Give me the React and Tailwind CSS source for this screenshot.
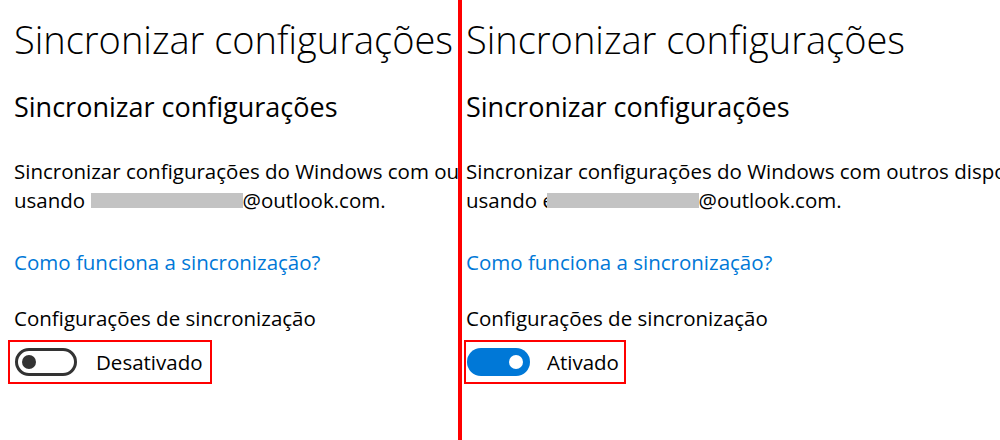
import React from 'react';

const Toggle = ({ on }) =>
  on ? (
    <div className="flex items-center justify-end w-[63px] h-[28px] rounded-full bg-[#0078d7] pr-[7px] shrink-0">
      <div className="w-[14px] h-[14px] rounded-full bg-white" />
    </div>
  ) : (
    <div className="flex items-center w-[62px] h-[28px] rounded-full border-[3px] border-[#333] pl-[4px] shrink-0">
      <div className="w-[14px] h-[14px] rounded-full bg-[#333]" />
    </div>
  );

const Panel = ({ on, pad, box, gap, partial }) => (
  <div className={`flex-1 overflow-hidden whitespace-nowrap text-black ${pad}`}>
    <div className="pt-[20px] h-[57px] text-[38px] leading-[38px] font-light">Sincronizar configurações</div>
    <div className="pt-[36px] text-[27px] leading-[27px]">Sincronizar configurações</div>
    <div className="pt-[37px] text-[20.5px] leading-[29px]">
      <div>Sincronizar configurações do Windows com outros dispositivos</div>
      <div>
        usando&nbsp;
        {partial && <span className="inline-block w-[4px] overflow-hidden align-top">e</span>}
        <span className="inline-block w-[152px] h-[15px] bg-[#c3c3c3] align-baseline" />
        @outlook.com.
      </div>
    </div>
    <div className="pt-[33px] text-[20.5px] leading-[29px] text-[#0078d7]">Como funciona a sincronização?</div>
    <div className="pt-[27px] text-[20.5px] leading-[29px]">Configurações de sincronização</div>
    <div className={`mt-[7px] flex items-center w-fit h-[44px] border-2 border-[#f00] ${box}`}>
      <Toggle on={on} />
      <span className={`text-[20.5px] leading-[29px] ${gap}`}>{on ? 'Ativado' : 'Desativado'}</span>
    </div>
  </div>
);

export default function App() {
  return (
    <div className="flex w-[1000px] h-[440px] bg-white font-['Open_Sans',sans-serif]">
      <div className="w-[458px] flex shrink-0">
        <Panel on={false} pad="pl-[14px]" box="-ml-[6px] pl-[5px] pr-[7px]" gap="ml-[19px]" />
      </div>
      <div className="w-[4px] bg-[#f00] shrink-0" />
      <Panel on pad="pl-[4px]" box="-ml-[2px] pl-[1px] pr-[5px]" gap="ml-[17px]" partial />
    </div>
  );
}
